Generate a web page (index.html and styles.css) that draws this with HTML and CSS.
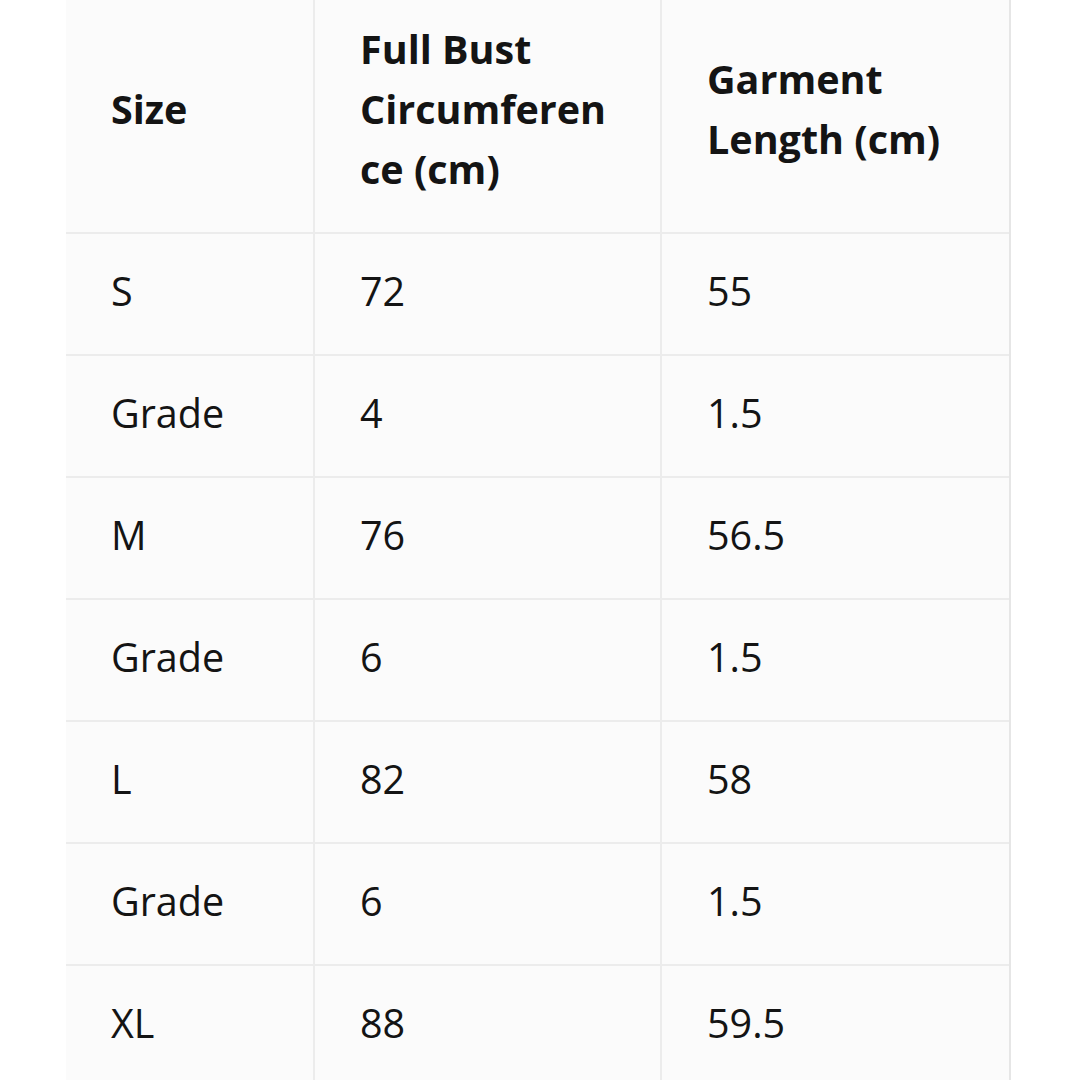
FILE: index.html
```html
<!DOCTYPE html>
<html>
<head>
<meta charset="utf-8">
<link rel="stylesheet" href="styles.css">
</head>
<body>
<div class="wrap">
<table class="size-table">
  <colgroup>
    <col class="c1"><col class="c2"><col class="c3">
  </colgroup>
  <thead>
    <tr>
      <th>Size</th>
      <th>Full Bust<br>Circumferen<br>ce (cm)</th>
      <th>Garment<br>Length (cm)</th>
    </tr>
  </thead>
  <tbody>
    <tr><td>S</td><td>72</td><td>55</td></tr>
    <tr><td>Grade</td><td>4</td><td>1.5</td></tr>
    <tr><td>M</td><td>76</td><td>56.5</td></tr>
    <tr><td>Grade</td><td>6</td><td>1.5</td></tr>
    <tr><td>L</td><td>82</td><td>58</td></tr>
    <tr><td>Grade</td><td>6</td><td>1.5</td></tr>
    <tr><td>XL</td><td>88</td><td>59.5</td></tr>
  </tbody>
</table>
</div>
</body>
</html>
```
FILE: styles.css
```css
html, body {
  margin: 0;
  padding: 0;
  background: #ffffff;
}
body {
  width: 1080px;
  height: 1080px;
  overflow: hidden;
}
.wrap {
  padding-left: 66px;
  margin-top: -10px;
}
.size-table {
  width: 943px;
  border-collapse: separate;
  border-spacing: 0;
  table-layout: fixed;
  background: #fbfbfb;
  border-right: 2px solid #e6e6e6;
  font-family: "Open Sans", "Noto Sans", sans-serif;
  font-size: 39.5px;
  line-height: 60px;
  color: #141414;
}
.c1 { width: 249px; }
.c2 { width: 347px; }
.c3 { width: 347px; }
.size-table th,
.size-table td {
  text-align: left;
  vertical-align: middle;
  padding: 27px 10px 33px 45px;
  border-bottom: 2px solid #ececec;
  border-right: 2px solid #ececec;
}
.size-table th {
  font-weight: 700;
  padding-top: 29px;
  padding-bottom: 33px;
}
.size-table td {
  font-weight: 400;
}
.size-table th:last-child,
.size-table td:last-child {
  border-right: none;
}
.size-table tbody tr:last-child td {
  border-bottom: none;
}
```
